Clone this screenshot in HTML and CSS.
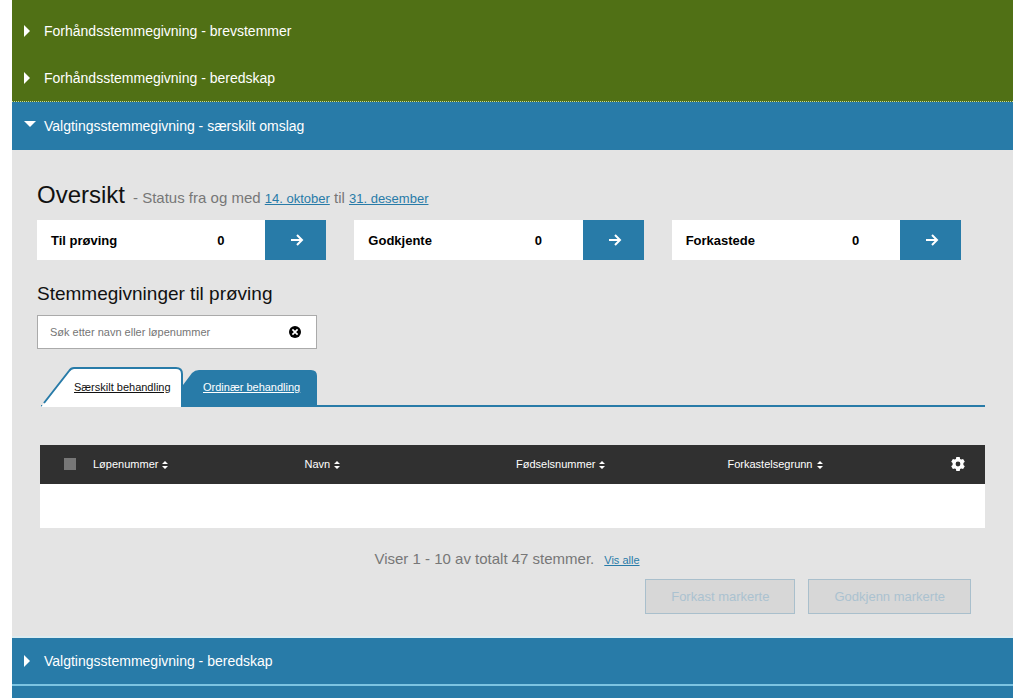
FILE: index.html
```html
<!DOCTYPE html>
<html lang="no">
<head>
<meta charset="utf-8">
<meta name="viewport" content="width=device-width, initial-scale=1">
<title>Valgtingsstemmegivning - særskilt omslag</title>
<link rel="stylesheet" href="styles.css">
</head>
<body>
<svg class="sprite" aria-hidden="true">
  <symbol id="arrow" viewBox="0 0 14 12"><path d="M1 6h11M7 1l5 5-5 5" fill="none" stroke="currentColor" stroke-width="2"/></symbol>
  <symbol id="sort" viewBox="0 0 6 8"><path d="M0 3l3-3 3 3zM0 5h6L3 8z" fill="currentColor"/></symbol>
  <symbol id="right" viewBox="0 0 6 12"><path d="M0 0l6 6-6 6z" fill="currentColor"/></symbol>
  <symbol id="down" viewBox="0 0 12 6"><path d="M0 0h12L6 6z" fill="currentColor"/></symbol>
</svg>
<main class="accordion">
  <div class="group group-early">
    <button class="bar" type="button" aria-expanded="false"><span class="marker"><svg class="right"><use href="#right"/></svg></span>Forhåndsstemmegivning - brevstemmer</button>
    <button class="bar" type="button" aria-expanded="false"><span class="marker"><svg class="right"><use href="#right"/></svg></span>Forhåndsstemmegivning - beredskap</button>
  </div>
  <button class="bar bar-day" type="button" aria-expanded="true" aria-controls="panel"><span class="marker marker-open"><svg class="down"><use href="#down"/></svg></span>Valgtingsstemmegivning - særskilt omslag</button>
  <section class="panel" id="panel">
    <header class="overview">
      <h1 class="title">Oversikt</h1>
      <p class="status">- Status fra og med <a class="link date" href="#">14. oktober</a> til <a class="link date" href="#">31. desember</a></p>
    </header>
    <div class="cards">
      <div class="card"><span class="card-name">Til prøving</span><span class="card-count">0</span><button class="card-go" type="button" aria-label="Vis til prøving"><svg class="arrow"><use href="#arrow"/></svg></button></div>
      <div class="card"><span class="card-name">Godkjente</span><span class="card-count">0</span><button class="card-go" type="button" aria-label="Vis godkjente"><svg class="arrow"><use href="#arrow"/></svg></button></div>
      <div class="card"><span class="card-name">Forkastede</span><span class="card-count">0</span><button class="card-go" type="button" aria-label="Vis forkastede"><svg class="arrow"><use href="#arrow"/></svg></button></div>
    </div>
    <h2 class="subtitle">Stemmegivninger til prøving</h2>
    <div class="search">
      <input class="search-input" type="text" placeholder="Søk etter navn eller løpenummer" aria-label="Søk etter navn eller løpenummer">
      <button class="clear" type="button" aria-label="Tøm søk"><svg class="clear-icon" viewBox="0 0 12 12"><circle cx="6" cy="6" r="6"/><path d="M3.400 3.400l5.200 5.200M8.600 3.400L3.400 8.600" stroke="#fff" stroke-width="1.700"/></svg></button>
    </div>
    <nav class="tabs">
      <a class="tab tab-active" href="#"><svg class="tab-shape" viewBox="0 0 142 40" preserveAspectRatio="none"><path d="M0 40L28 4Q30 1 33 1H135Q141 1 141 7V40z" fill="#fff"/><path d="M3 36L28 4Q30 1 33 1H135Q141 1 141 7V40" fill="none" stroke="#287ba8" stroke-width="2"/></svg><span class="tab-text">Særskilt behandling</span></a>
      <a class="tab tab-other" href="#"><svg class="tab-shape" viewBox="0 0 134 35" preserveAspectRatio="none"><path d="M0 15L9 3Q12 0 16 0H128Q134 0 134 6V35H0z" fill="#287ba8"/></svg><span class="tab-text">Ordinær behandling</span></a>
    </nav>
    <table class="votes">
      <thead>
        <tr>
          <th class="col-check"><input class="check" type="checkbox" aria-label="Velg alle"></th>
          <th><button class="sort-button" type="button">Løpenummer <svg class="sort"><use href="#sort"/></svg></button></th>
          <th><button class="sort-button" type="button">Navn <svg class="sort"><use href="#sort"/></svg></button></th>
          <th><button class="sort-button" type="button">Fødselsnummer <svg class="sort"><use href="#sort"/></svg></button></th>
          <th><button class="sort-button" type="button">Forkastelsegrunn <svg class="sort"><use href="#sort"/></svg></button></th>
          <th class="col-gear"><button class="gear-button" type="button" aria-label="Innstillinger"><svg class="gear" viewBox="0 0 14 14"><path fill-rule="evenodd" fill="currentColor" d="M5.300 0h3.400l.4 1.900 1.100.6 1.900-.6 1.700 2.900-1.400 1.300v1.800l1.400 1.300-1.700 2.900-1.900-.6-1.100.6-.4 1.900H5.300l-.4-1.900-1.100-.6-1.900.6L.2 9.200l1.400-1.300V6.100L.2 4.800l1.700-2.900 1.900.6 1.100-.6zM7 4.600a2.400 2.400 0 1 0 0 4.800 2.400 2.400 0 1 0 0-4.800z"/></svg></button></th>
        </tr>
      </thead>
      <tbody><tr><td class="empty" colspan="6"></td></tr></tbody>
    </table>
    <p class="pager">Viser 1 - 10 av totalt 47 stemmer. <a class="link show-all" href="#">Vis alle</a></p>
    <div class="actions">
      <button class="action" type="button" disabled>Forkast markerte</button>
      <button class="action" type="button" disabled>Godkjenn markerte</button>
    </div>
  </section>
  <button class="bar bar-day bar-last" type="button" aria-expanded="false"><span class="marker"><svg class="right"><use href="#right"/></svg></span>Valgtingsstemmegivning - beredskap</button>
  <div class="rest"></div>
</main>
</body>
</html>
```
FILE: styles.css
```css
* { box-sizing: border-box; }
body {
  margin: 0;
  background: #fff;
  color: #111;
  font-family: "Liberation Sans", Arial, sans-serif;
  font-size: 14px;
}
button { font: inherit; border: 0; padding: 0; background: none; color: inherit; cursor: pointer; }
h1, h2, p { margin: 0; font-weight: normal; }
.sprite { display: none; }
.accordion {
  display: flex;
  flex-direction: column;
  min-height: 100vh;
  padding: 0 11px 0 12px;
}
.group-early {
  padding-top: 7px;
  background: #507015;
  border-bottom: 1px dotted #c5d79b;
}
.bar {
  display: flex;
  align-items: center;
  width: 100%;
  height: 47px;
  padding-left: 12px;
  color: #fff;
  text-align: left;
}
.bar-day { height: 48px; background: #287ba8; }
.bar-last { border-bottom: 2px solid #7cc4e2; }
.rest { flex: 1; min-height: 12px; background: #287ba8; }
.marker { display: flex; width: 20px; }
.marker-open { padding-bottom: 5px; }
.right { width: 6px; height: 12px; }
.down { width: 12px; height: 6px; }

.panel { padding: 30px 28px 22px 25px; background: #e4e4e4; border-bottom: 2px solid #dcebf0; }
.overview { display: flex; align-items: baseline; gap: 8px; height: 40px; }
.title { font-size: 24px; line-height: 30px; }
.status { color: #777; font-size: 15px; }
.link { color: #287ba8; }
.date { font-size: 13px; }
.cards { display: grid; grid-template-columns: repeat(3, 1fr); gap: 28px; padding-right: 24px; }
.card { display: flex; align-items: center; height: 40px; padding-left: 14px; background: #fff; color: #000; font-size: 13px; font-weight: bold; }
.card-name { flex: 1; }
.card-count { width: 48px; }
.card-go { display: flex; align-items: center; justify-content: center; width: 61px; height: 40px; padding-left: 3px; background: #287ba8; color: #fff; }
.arrow { width: 14px; height: 12px; }
.subtitle { margin-top: 22px; font-size: 19px; line-height: 24px; }
.search { display: flex; align-items: center; width: 280px; height: 34px; margin-top: 9px; padding: 0 15px 0 12px; background: #fff; border: 1px solid #aaa; }
.search-input { flex: 1; min-width: 0; padding: 0; border: 0; outline: 0; background: none; font: inherit; font-size: 11px; }
.search-input::placeholder { color: #757575; opacity: 1; }
.clear { display: flex; }
.clear-icon { width: 12px; height: 12px; }

.tabs { display: flex; align-items: flex-end; height: 40px; margin: 18px 0 0 4px; border-bottom: 2px solid #287ba8; font-size: 11px; }
.tab { position: relative; display: flex; align-items: center; height: 35px; }
.tab-shape { position: absolute; left: 0; top: 0; width: 100%; height: 100%; }
.tab-text { position: relative; }
.tab-active { width: 142px; height: 40px; margin-bottom: -2px; padding-left: 33px; color: #111; }
.tab-other { width: 134px; padding: 0 0 2px 20px; color: #fff; }

.votes { width: calc(100% - 3px); margin: 38px 0 0 3px; border-collapse: collapse; table-layout: fixed; background: #fff; color: #fff; font-size: 11px; }
.votes th { height: 39px; padding: 0 0 2px; background: #303030; text-align: left; font-weight: normal; }
.votes .col-check { width: 53px; padding-left: 24px; }
.votes .col-gear { width: 46px; padding-left: 12px; }
.votes .empty { height: 44px; padding: 0; }
.check { display: block; appearance: none; width: 12px; height: 12px; margin: 0; background: #777; }
.sort-button { display: flex; align-items: center; gap: 4px; }
.sort { width: 6px; height: 8px; margin-top: 3px; }
.gear-button { display: flex; }
.gear { width: 14px; height: 14px; }

.pager { display: flex; align-items: baseline; justify-content: center; gap: 10px; margin-top: 20px; padding-right: 8px; color: #777; font-size: 15px; line-height: 22px; }
.show-all { font-size: 11px; }
.actions { display: flex; justify-content: flex-end; gap: 13px; margin-top: 8px; padding-right: 14px; }
.action { height: 35px; padding: 0 25px; background: #d7d7d7; border: 1px solid #a9bfcc; color: #abc2d0; font-size: 13px; cursor: default; }
```
